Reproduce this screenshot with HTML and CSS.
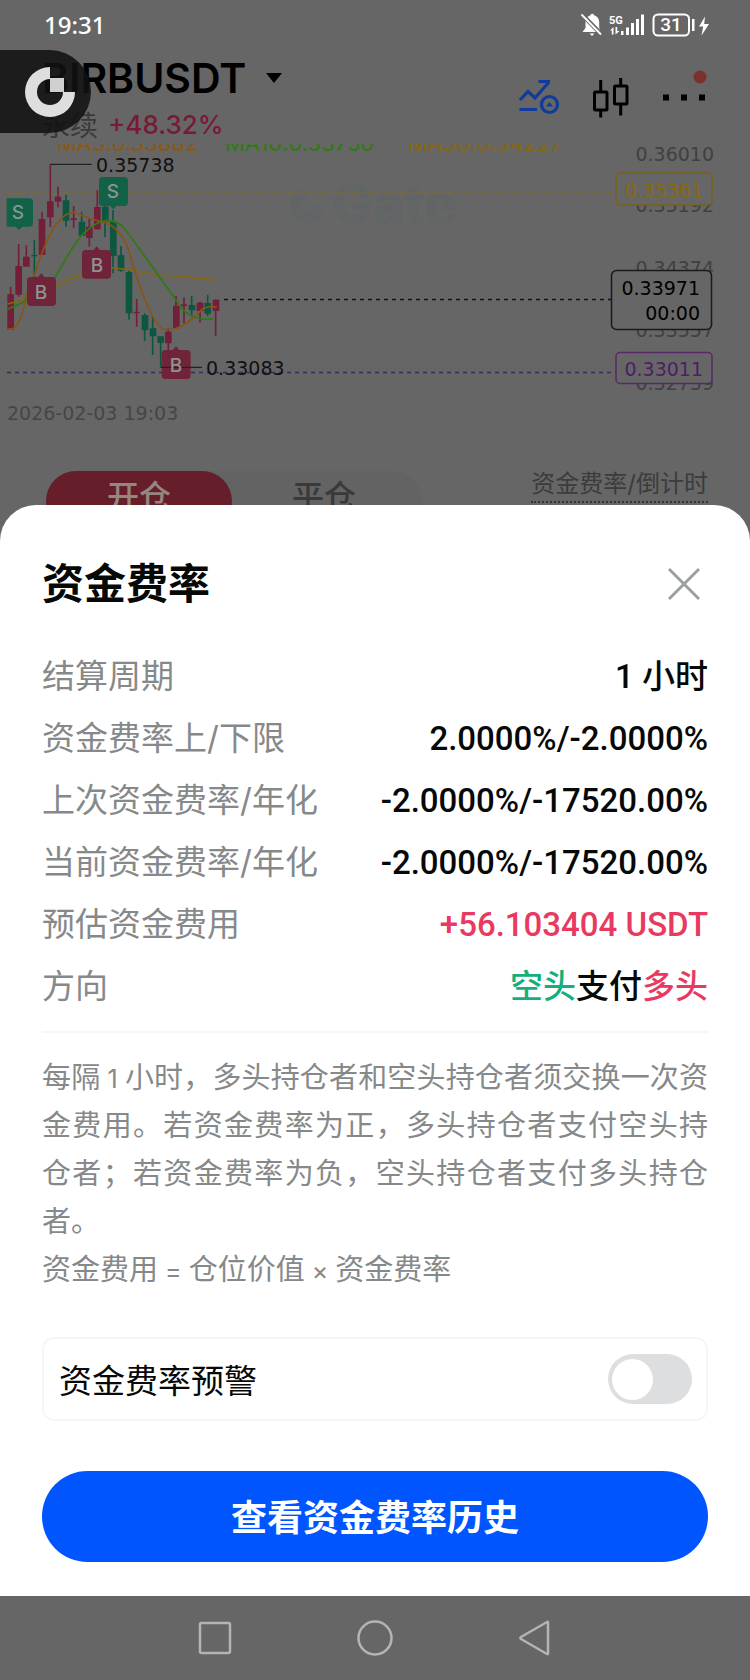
FILE: index.html
```html
<!DOCTYPE html>
<html lang="zh-CN">
<head>
<meta charset="utf-8">
<meta name="viewport" content="width=device-width, initial-scale=1">
<title>资金费率</title>
<link rel="stylesheet" href="styles.css">
</head>
<body>
<div class="screen">
  <div class="app">
    <div class="status">
      <span class="status-time">19:31</span>
      <svg class="status-icons" width="130" height="26" viewBox="0 0 130 26" aria-hidden="true">
        <g fill="#fff">
          <path d="M2.500 20 5.500 16V10.500C5.500 6.500 7.500 4 10.500 3.200A1.800 1.800 0 0 1 14 3.200C17.500 4 19.200 7 19.200 10.500V16L21 20Z"/>
          <path d="M9.500 21.500H14.500L12 24Z"/>
          <path d="M2 2.500 21.500 22.500" stroke="#666" stroke-width="4.500"/>
          <path d="M1.500 2.500 21 22.500" stroke="#fff" stroke-width="1.800"/>
          <path d="M30 18.500 33.500 15V22.500H31.800V18.500ZM35.500 15V22.500L39.500 19H37.200V15Z"/>
          <path d="M41 19h2.500v4H41zM46 15.500h3V23h-3zM51 11h3v12h-3zM56 7h3v16h-3zM61 2.500h3V23h-3z"/>
          <path d="M112 7h2.500v12H112zM125 4.500 119 14.500h4.200l-1.700 9L129 12h-4.800Z"/>
        </g>
        <rect x="73.500" y="2.500" width="35.500" height="21" rx="4.500" fill="none" stroke="#fff" stroke-width="2"/>
        <text class="status-net" x="29" y="11.500">5G</text>
        <text class="status-bat" x="91" y="19" text-anchor="middle">31</text>
      </svg>
    </div>

    <header class="header">
      <div class="pair">
        <h1 class="pair-name">BIRBUSDT
          <svg width="18" height="12" viewBox="0 0 18 12" aria-hidden="true"><path d="M1 1H17L9 11Z"/></svg>
        </h1>
        <p class="pair-sub"><span>永续</span><span class="pair-change">+48.32%</span></p>
      </div>
      <div class="tools">
        <svg width="42" height="42" viewBox="0 0 42 42" fill="none" stroke="#103b9c" stroke-width="3.200" role="img" aria-label="指标">
          <path d="M2 23 10 14.500 17 21 31 5M20.500 4.500H32M1.500 32.500H19"/>
          <circle cx="31.500" cy="27.500" r="8"/>
          <path d="M28 29.500 31.500 25 35 29.500Z" fill="#103b9c" stroke="none"/>
        </svg>
        <svg width="38" height="42" viewBox="0 0 38 42" fill="none" stroke="#000" stroke-width="3" role="img" aria-label="K线">
          <rect x="2.500" y="15" width="12.500" height="18" rx="1"/>
          <path d="M8.700 3V15M8.700 33V40.500M28.700 1V9M28.700 27V38.500"/>
          <rect x="22.500" y="9" width="12.500" height="18" rx="1"/>
        </svg>
        <svg width="46" height="42" viewBox="0 0 46 42" role="img" aria-label="更多">
          <path d="M1 17.500h6v6H1zM19 17.500h6v6h-6zM37 17.500h6v6h-6z"/>
          <circle cx="38" cy="0" r="6.500" fill="#7c302c"/>
        </svg>
      </div>
      <div class="float-chip">
        <svg width="52" height="52" viewBox="0 0 52 52" aria-hidden="true">
          <path d="M26 1A25 25 0 1 0 51 26H39A13 13 0 1 1 26 13Z" fill="#dedede"/>
          <rect x="26" y="12" width="14" height="14" fill="#d0d0d0"/>
        </svg>
      </div>
    </header>

    <svg class="chart" viewBox="0 144 750 286" role="img" aria-label="K线图">
      <g class="ma">
        <text x="57" y="151" fill="#8a5a10">MA5:0.33882</text>
        <text x="225" y="151" fill="#2f7a12">MA10:0.33750</text>
        <text x="408" y="151" fill="#86680c">MA30:0.34227</text>
      </g>
      <g fill="#616566">
        <path d="M307 189A17 17 0 1 0 324 206H314A7 7 0 1 1 307 199Z"/>
        <text class="watermark" x="332" y="223">Gate</text>
      </g>
      <g fill="none" stroke-width="1.300" stroke-dasharray="4 4">
        <path d="M7 193H612" stroke="#7d6c24"/>
        <path d="M224 299.500H611" stroke="#111"/>
        <path d="M7 372.500H616" stroke="#3f2a5c"/>
      </g>
      <g transform="translate(0 130) scale(.33333)">
        <g stroke="#741f38" fill="#741f38" stroke-width="5">
          <path d="M32 470V600M56 342V500M79 346V410M126 245V375M151 103V291M174 170V232M221 228V293M268 265V350M292 181V298M410 507V590M505 595V660M528 498V595M552 502V580M600 515V578M647 508V618"/>
          <path stroke="none" d="M22 493h20v107H22zM46 408h20v86H46zM69 380h20v30H69zM116 267h20v108h-20zM141 214h20v48h-20zM164 200h20v15h-20zM212 265h18v5h-18zM258 290h20v34h-20zM282 231h20v67h-20zM401 545h18v5h-18zM495 605h20v35h-20zM519 527h20v68h-20zM543 523h18v5h-18zM590 518h20v25h-20zM638 509h20v34h-20z"/>
        </g>
        <g stroke="#0d5741" fill="#0d5741" stroke-width="5">
          <path d="M103 330V440M198 194V290M245 245V318M315 200V322M339 240V430M363 348V425M387 420V569M434 550V633M458 558V675M482 620V712M575 498V560M623 494V558"/>
          <path stroke="none" d="M94 375h18v4H94zM188 211h20v61h-20zM236 275h20v42h-20zM306 230h20v45h-20zM330 275h20v103h-20zM353 376h20v46h-20zM377 426h20v124h-20zM425 555h20v46h-20zM449 595h20v24h-20zM472 619h20v20h-20zM566 525h20v16h-20zM613 519h20v32h-20z"/>
        </g>
        <g fill="none" stroke-width="5">
          <path stroke="#86680c" d="M22 522Q80 510 168 469Q210 443 250 433Q300 408 345 414Q410 422 470 435Q560 438 648 451"/>
          <path stroke="#2f7a12" d="M22 538Q100 510 167 440Q225 335 250 311Q290 273 320 271Q355 271 375 298Q440 385 545 535Q580 575 640 566"/>
          <path stroke="#8a5414" d="M22 596Q60 610 78 500Q105 430 120 385Q170 245 222 247Q290 275 315 277Q370 300 390 375Q450 580 490 597Q540 610 605 538Q630 525 650 532"/>
        </g>
        <path d="M151 103H275" stroke="#222" stroke-width="4"/>
        <g fill="#126248">
          <path d="M22 205H88Q99 205 99 216V279Q99 290 88 290H67L57 300 47 290H20V205Z"/>
          <path d="M308 141H373Q384 141 384 152V217Q384 228 373 228H350L340 238 330 228H308Q297 228 297 217V152Q297 141 308 141Z"/>
        </g>
        <g fill="#70243a">
          <path d="M92 441H114L124 430 134 441H157Q168 441 168 452V517Q168 528 157 528H92Q81 528 81 517V452Q81 441 92 441Z"/>
          <path d="M257 360H280L290 349 300 360H322Q333 360 333 371V435Q333 446 322 446H257Q246 446 246 435V371Q246 360 257 360Z"/>
          <path d="M496 660H518L528 649 538 660H561Q572 660 572 671V736Q572 747 561 747H496Q485 747 485 736V671Q485 660 496 660Z"/>
        </g>
        <path d="M482 712H606" stroke="#222" stroke-width="4"/>
      </g>
      <g class="mark" text-anchor="middle">
        <text x="18" y="219">S</text><text x="113" y="198">S</text>
        <text x="41" y="299">B</text><text x="97" y="272">B</text><text x="176" y="372">B</text>
      </g>
      <g class="num">
        <text x="96" y="172" fill="#111">0.35738</text>
        <text x="206" y="375" fill="#111">0.33083</text>
      </g>
      <text class="num" x="7" y="420" fill="#444648">2026-02-03 19:03</text>
      <g class="num" fill="#3f4142" text-anchor="end">
        <text x="714" y="161">0.36010</text>
        <text x="714" y="212">0.35192</text>
        <text x="714" y="275">0.34374</text>
        <text x="714" y="337">0.33557</text>
        <text x="714" y="390">0.32739</text>
      </g>
      <g fill="#666" stroke-width="1.500">
        <rect x="616" y="173" width="96" height="32" rx="4" stroke="#7a6118"/>
        <rect x="611.500" y="270.500" width="100" height="59" rx="5" stroke="#1a1a1a"/>
        <rect x="616" y="352.500" width="96" height="31" rx="4" stroke="#58286b"/>
      </g>
      <g class="num" text-anchor="end">
        <text x="703" y="197" fill="#8a680c">0.35361</text>
        <text x="700" y="295" fill="#000">0.33971</text>
        <text x="700" y="320" fill="#000">00:00</text>
        <text x="703" y="376" fill="#4f1d66">0.33011</text>
      </g>
    </svg>

    <div class="trade-row">
      <div class="tabs">
        <button class="tab tab-open" type="button">开仓</button>
        <button class="tab" type="button">平仓</button>
      </div>
      <span class="countdown">资金费率/倒计时</span>
    </div>
  </div>

  <section class="sheet" role="dialog" aria-labelledby="sheet-title">
    <div class="sheet-head">
      <h2 id="sheet-title" class="sheet-title">资金费率</h2>
      <button class="close" type="button" aria-label="关闭">
        <svg width="36" height="36" viewBox="0 0 36 36" aria-hidden="true"><path d="M3 3 33 33M33 3 3 33" fill="none" stroke="#9b9fa1" stroke-width="3"/></svg>
      </button>
    </div>

    <dl class="rates">
      <div class="rate"><dt>结算周期</dt><dd>1 小时</dd></div>
      <div class="rate"><dt>资金费率上/下限</dt><dd>2.0000%/-2.0000%</dd></div>
      <div class="rate"><dt>上次资金费率/年化</dt><dd>-2.0000%/-17520.00%</dd></div>
      <div class="rate"><dt>当前资金费率/年化</dt><dd>-2.0000%/-17520.00%</dd></div>
      <div class="rate"><dt>预估资金费用</dt><dd class="long">+56.103404 USDT</dd></div>
      <div class="rate"><dt>方向</dt><dd><span class="short">空头</span>支付<span class="long">多头</span></dd></div>
    </dl>

    <div class="note">
      <p>每隔<span class="latin"> 1 </span>小时，多头持仓者和空头持仓者须交换一次资金费用。若资金费率为正，多头持仓者支付空头持仓者；若资金费率为负，空头持仓者支付多头持仓者。</p>
      <p>资金费用<span class="latin"> = </span>仓位价值<span class="latin"> × </span>资金费率</p>
    </div>

    <label class="alert">
      <span>资金费率预警</span>
      <input class="switch" type="checkbox" role="switch">
    </label>

    <button class="history" type="button">查看资金费率历史</button>
  </section>

  <nav class="sysnav" aria-label="系统导航">
    <button type="button" aria-label="最近任务"><svg width="36" height="36" viewBox="0 0 36 36"><rect x="3" y="3" width="30" height="30" rx="1.500"/></svg></button>
    <button type="button" aria-label="主页"><svg width="36" height="36" viewBox="0 0 36 36"><circle cx="18" cy="18" r="16.500"/></svg></button>
    <button type="button" aria-label="返回"><svg width="36" height="36" viewBox="0 0 36 36"><path d="M31 2.500V33.500Q31 34.500 30 34L4 19Q2.500 18 4 17L30 2Q31 1.500 31 2.500Z"/></svg></button>
  </nav>
</div>
</body>
</html>
```
FILE: styles.css
```css
* { box-sizing: border-box; }

body, h1, h2, p, dl, dd { margin: 0; }

body {
  background: #666;
  color: #070808;
  font-family: Inter, "Noto Sans CJK SC", sans-serif;
}

button {
  padding: 0;
  border: 0;
  background: none;
  font: inherit;
  cursor: pointer;
}

svg { display: block; }

.screen {
  display: flex;
  flex-direction: column;
  min-height: 100vh;
}

.status {
  display: flex;
  align-items: center;
  justify-content: space-between;
  height: 50px;
  padding: 0 40px 0 44px;
  color: #fff;
}

.status-time {
  font: 500 24px/30px "Noto Sans", sans-serif;
}

.status-net { fill: #fff; font: 700 11px Roboto, sans-serif; }
.status-bat { fill: #fff; font: 500 19px Roboto, sans-serif; }

.header {
  position: relative;
  display: flex;
  justify-content: space-between;
  height: 94px;
  padding: 0 42px;
}

.pair-name {
  display: flex;
  align-items: center;
  gap: 19px;
  font-size: 41px;
  font-weight: 600;
  line-height: 56px;
  color: #000;
}

.pair-sub {
  display: flex;
  align-items: center;
  gap: 10px;
  height: 36px;
  font-size: 28px;
  color: #3a3a3b;
}

.pair-change {
  font-size: 26px;
  font-weight: 500;
  color: #781a36;
}

.tools {
  display: flex;
  gap: 32px;
  padding-top: 27px;
}

.tools svg { overflow: visible; }

.float-chip {
  position: absolute;
  top: 0;
  left: 0;
  display: flex;
  align-items: center;
  width: 91px;
  height: 83px;
  padding-left: 24px;
  border-radius: 0 42px 42px 0;
  background: rgba(17, 17, 17, 0.87);
}

.chart { width: 100%; }
.ma { font-size: 22px; font-feature-settings: "calt" 0; }
.num { font-family: "DejaVu Sans", sans-serif; font-size: 19px; }
.mark { font-size: 19px; font-weight: 500; fill: #8d9490; }
.watermark { font-size: 54px; font-weight: 800; }

.trade-row {
  display: flex;
  justify-content: space-between;
  align-items: flex-start;
  height: 101px;
  padding: 41px 42px 0 46px;
}

.tabs {
  display: flex;
  border-radius: 30px;
  background: #636363;
}

.tab {
  width: 190px;
  height: 60px;
  padding: 0 6px 20px 0;
  border-radius: 30px;
  font-size: 32px;
  font-weight: 500;
  color: #38393a;
}

.tab-open {
  width: 186px;
  padding-right: 0;
  background: #661e2b;
  color: #95877f;
}

.countdown {
  padding-bottom: 4px;
  border-bottom: 2px dotted #333536;
  font-size: 24px;
  line-height: 26px;
  color: #3a3c3d;
}

.sheet {
  display: flex;
  flex-direction: column;
  margin-top: -26px;
  padding: 49px 42px 34px;
  border-radius: 36px 36px 0 0;
  background: #fff;
}

.sheet-head {
  display: flex;
  align-items: center;
  justify-content: space-between;
  height: 60px;
  padding-right: 6px;
}

.sheet-title {
  font-size: 42px;
  font-weight: 700;
  line-height: 60px;
}

.rates { margin-top: 31px; }

.rate {
  display: flex;
  align-items: baseline;
  justify-content: space-between;
  height: 62px;
  font-size: 33px;
  line-height: 62px;
}

.rate dt { color: #86898a; }

.rate dd {
  font-family: Roboto, "Noto Sans CJK SC", sans-serif;
  font-weight: 500;
}

.rate .long { color: #e83a60; }
.rate .short { color: #14b07c; }

.note {
  margin-top: 14px;
  padding-top: 21px;
  border-top: 2px solid #f5f6f6;
  font-size: 29px;
  line-height: 48px;
  text-align: justify;
  color: #86898a;
}

.latin {
  font-size: 25px;
  line-height: 24px;
}

.alert {
  display: flex;
  align-items: center;
  justify-content: space-between;
  height: 84px;
  margin-top: 43px;
  padding: 0 14px 0 15px;
  border: 2px solid #f5f6f6;
  border-radius: 12px;
  font-size: 33px;
}

.switch {
  display: flex;
  align-items: center;
  width: 84px;
  height: 50px;
  margin: 0;
  padding: 0 4px;
  appearance: none;
  border-radius: 25px;
  background: #dcdee0;
}

.switch::before {
  content: "";
  width: 41px;
  height: 41px;
  border-radius: 50%;
  background: #fff;
}

.switch:checked { justify-content: flex-end; background: #0055ff; }

.history {
  height: 91px;
  margin-top: 50px;
  padding-bottom: 4px;
  border-radius: 46px;
  background: #0055ff;
  font-size: 36px;
  font-weight: 700;
  color: #fff;
}

.sysnav {
  display: flex;
  align-items: center;
  justify-content: center;
  gap: 124px;
  height: 84px;
}

.sysnav svg {
  fill: none;
  stroke: #b4b4b4;
  stroke-width: 2.5;
}
```
